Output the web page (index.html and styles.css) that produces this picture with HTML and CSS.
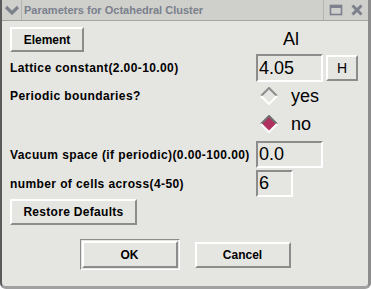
FILE: index.html
```html
<!DOCTYPE html>
<html lang="en">
<head>
    <meta charset="UTF-8">
    <title>Parameters for Octahedral Cluster</title>
    <link rel="stylesheet" href="styles.css">
</head>
<body>
    <div class="window">
        <!-- Title bar -->
        <div class="titlebar">
            <div class="menu-icon">
                <svg width="16" height="12" viewBox="0 0 16 12"><path d="M2 3 L8 9 L14 3" fill="none" stroke="#7c818c" stroke-width="3.2"/></svg>
            </div>
            <div class="title">Parameters for Octahedral Cluster</div>
            <div class="title-buttons">
                <svg width="14" height="14" viewBox="0 0 14 14"><rect x="1.5" y="2.5" width="11" height="9" fill="none" stroke="#7c818c" stroke-width="1.6"/><rect x="1.5" y="2.5" width="11" height="2.5" fill="#7c818c"/></svg>
                <svg width="14" height="14" viewBox="0 0 14 14"><path d="M2.5 2.5 L11.5 11.5 M11.5 2.5 L2.5 11.5" stroke="#7c818c" stroke-width="3"/></svg>
            </div>
        </div>

        <div class="content">
            <div class="row row-element">
                <div class="label"><button class="btn btn-element">Element</button></div>
                <div class="control"><span class="symbol">Al</span></div>
            </div>

            <div class="row row-lattice">
                <div class="label">Lattice constant(2.00-10.00)</div>
                <div class="control">
                    <div class="field field-wide">4.05</div>
                    <button class="btn btn-h">H</button>
                </div>
            </div>

            <div class="row row-radio">
                <div class="label">Periodic boundaries?</div>
                <div class="control">
                    <svg class="diamond" width="18" height="18" viewBox="0 0 18 18">
                        <path d="M9 1 L17 9 L9 17 L1 9 Z" fill="#e5e5e1"/>
                        <path d="M1 9 L9 1 L17 9" fill="none" stroke="#8c8c8c" stroke-width="2"/>
                        <path d="M1 9 L9 17 L17 9" fill="none" stroke="#ffffff" stroke-width="2"/>
                    </svg>
                    <span class="radio-text">yes</span>
                </div>
            </div>

            <div class="row row-radio">
                <div class="label"></div>
                <div class="control">
                    <svg class="diamond" width="18" height="18" viewBox="0 0 18 18">
                        <path d="M9 1 L17 9 L9 17 L1 9 Z" fill="#b03060"/>
                        <path d="M1 9 L9 1 L17 9" fill="none" stroke="#6e6e6e" stroke-width="2"/>
                        <path d="M1 9 L9 17 L17 9" fill="none" stroke="#ffffff" stroke-width="2"/>
                    </svg>
                    <span class="radio-text">no</span>
                </div>
            </div>

            <div class="row row-vacuum">
                <div class="label">Vacuum space (if periodic)(0.00-100.00)</div>
                <div class="control"><div class="field field-wide">0.0</div></div>
            </div>

            <div class="row row-cells">
                <div class="label">number of cells across(4-50)</div>
                <div class="control"><div class="field field-small">6</div></div>
            </div>

            <div class="row row-restore">
                <button class="btn btn-restore">Restore Defaults</button>
            </div>

            <div class="actions">
                <div class="default-ring"><button class="btn btn-ok">OK</button></div>
                <button class="btn btn-cancel">Cancel</button>
            </div>
        </div>
    </div>
</body>
</html>
```

FILE: styles.css
```css
body {
    margin: 0;
    background-color: #ffffff;
    font-family: "Liberation Sans", Arial, sans-serif;
}
.window {
    width: 371px;
    height: 289px;
    box-sizing: border-box;
    background-color: #e5e5e1;
    border-left: 2px solid #5a5a5a;
    border-right: 3px solid #8c8c8c;
    border-bottom: 3px solid #a0a0a0;
    border-bottom-left-radius: 6px;
    border-bottom-right-radius: 6px;
    overflow: hidden;
}
.titlebar {
    height: 20px;
    display: flex;
    align-items: center;
    background-color: #cfcfcb;
    border-bottom: 1px solid #a4a4a0;
}
.menu-icon {
    width: 19px;
    height: 20px;
    display: flex;
    align-items: center;
    justify-content: center;
    border-right: 1px solid #b4b4b0;
}
.title {
    flex: 1;
    padding-left: 2px;
    font-size: 11px;
    font-weight: bold;
    color: #7a808c;
}
.title-buttons {
    display: flex;
    gap: 7px;
    padding: 0 4px 0 5px;
    height: 20px;
    align-items: center;
    border-left: 1px solid #b4b4b0;
}
.content {
    padding: 6px 0 0 8px;
}
.row {
    display: flex;
    align-items: center;
}
.label {
    width: 246px;
    font-size: 12px;
    font-weight: bold;
    letter-spacing: 0.4px;
    color: #000;
}
.control {
    display: flex;
    align-items: center;
}
.row-element {
    height: 25px;
}
.row-lattice {
    height: 28px;
    margin-top: 2px;
}
.row-radio {
    height: 28px;
}
.row-vacuum {
    height: 27px;
    margin-top: 3px;
}
.row-cells {
    height: 27px;
    margin-top: 2px;
}
.row-restore {
    height: 26px;
    margin-top: 2px;
}
.btn {
    font-family: "Liberation Sans", Arial, sans-serif;
    font-size: 12px;
    font-weight: bold;
    color: #000;
    background-color: #e5e5e1;
    border: 2px solid;
    border-color: #ffffff #8c8c8c #8c8c8c #ffffff;
    padding: 0;
    margin: 0;
}
.btn-element {
    width: 74px;
    height: 25px;
}
.symbol {
    padding-left: 27px;
    font-size: 18px;
}
.field {
    box-sizing: border-box;
    height: 28px;
    border: 2px solid;
    border-color: #8c8c8c #ffffff #ffffff #8c8c8c;
    padding-left: 1px;
    font-size: 18px;
    line-height: 24px;
}
.field-wide {
    width: 67px;
}
.row-vacuum .field,
.row-cells .field {
    height: 27px;
    line-height: 23px;
}
.field-small {
    width: 37px;
}
.btn-h {
    width: 32px;
    height: 26px;
    margin-left: 3px;
    font-weight: normal;
    font-size: 14px;
}
.diamond {
    margin-left: 4px;
}
.radio-text {
    margin-left: 13px;
    font-size: 18px;
}
.btn-restore {
    width: 127px;
    height: 26px;
    letter-spacing: 0.3px;
}
.actions {
    display: flex;
    justify-content: center;
    align-items: center;
    gap: 15px;
    margin-top: 14px;
    margin-left: -8px;
}
.default-ring {
    padding: 1px;
    border: 1px solid;
    border-color: #8c8c8c #ffffff #ffffff #8c8c8c;
}
.btn-ok {
    width: 96px;
    height: 27px;
}
.btn-cancel {
    width: 96px;
    height: 26px;
}
```
